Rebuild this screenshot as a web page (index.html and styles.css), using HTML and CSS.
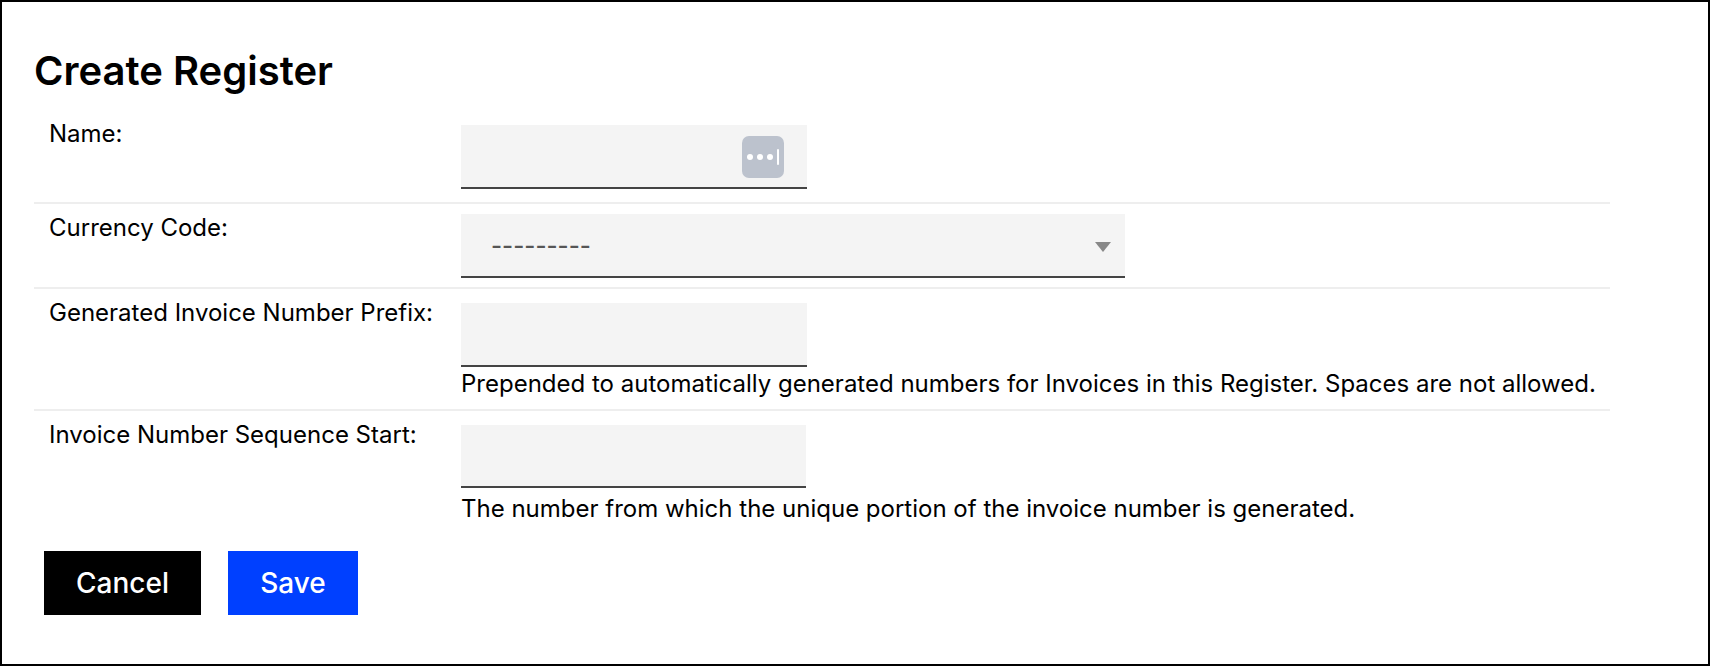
FILE: index.html
```html
<!DOCTYPE html>
<html lang="en">
<head>
<meta charset="utf-8">
<title>Create Register</title>
<link rel="stylesheet" href="styles.css">
</head>
<body>
<main class="page">
  <h1 class="title">Create Register</h1>
  <form class="form">
    <div class="row row-name">
      <label class="label" for="name">Name:</label>
      <div class="field">
        <div class="control control-short">
          <input class="input" id="name" type="text">
          <svg class="manager-icon" viewBox="0 0 42 42" width="42" height="42" aria-hidden="true">
            <rect width="42" height="42" rx="7" fill="#bcc2cd"/>
            <circle cx="8" cy="21" r="3" fill="#fff"/>
            <circle cx="18" cy="21" r="3" fill="#fff"/>
            <circle cx="28" cy="21" r="3" fill="#fff"/>
            <rect x="35" y="13" width="2" height="16" rx="1" fill="#fff"/>
          </svg>
        </div>
      </div>
    </div>
    <div class="row row-select">
      <label class="label" for="currency">Currency Code:</label>
      <div class="field field-flush">
        <div class="control control-wide">
          <select class="input select" id="currency">
            <option>---------</option>
          </select>
          <svg class="caret" viewBox="0 0 16 10" width="16" height="10" aria-hidden="true">
            <path d="M0 0H16L8 10Z" fill="#888"/>
          </svg>
        </div>
      </div>
    </div>
    <div class="row row-prefix">
      <label class="label" for="prefix">Generated Invoice Number Prefix:</label>
      <div class="field field-tight">
        <div class="control control-short">
          <input class="input" id="prefix" type="text">
        </div>
        <p class="help help-prefix">Prepended to automatically generated numbers for Invoices in this Register. Spaces are not allowed.</p>
      </div>
    </div>
    <div class="row row-last">
      <label class="label" for="start">Invoice Number Sequence Start:</label>
      <div class="field field-tight">
        <div class="control control-seq">
          <input class="input" id="start" type="text">
        </div>
        <p class="help help-seq">The number from which the unique portion of the invoice number is generated.</p>
      </div>
    </div>
    <div class="actions">
      <button class="btn btn-cancel" type="button">Cancel</button>
      <button class="btn btn-save" type="submit">Save</button>
    </div>
  </form>
</main>
</body>
</html>
```

FILE: styles.css
```css
* { box-sizing: border-box; }

html, body { margin: 0; padding: 0; background: #fff; }

body {
  font-family: Inter, "Liberation Sans", sans-serif;
  color: #000;
}

.page {
  width: 1710px;
  height: 666px;
  border: 2px solid #000;
  padding: 45px 0 0 32px;
  overflow: hidden;
}

.title {
  margin: 0;
  font-size: 40px;
  line-height: 48px;
  font-weight: 600;
  height: 63px;
}

.form { width: 1576px; }

.row {
  display: grid;
  grid-template-columns: 427px 1fr;
  padding: 10px 0;
  border-bottom: 2px solid #eeeeee;
}

.row-name { padding-bottom: 13px; }
.row-select { padding-bottom: 9px; }
.row-prefix { padding-bottom: 9px; }
.row-last { border-bottom: 0; padding-bottom: 0; }

.label {
  padding-left: 15px;
  font-size: 24px;
  line-height: 28px;
}

.field { padding-top: 5px; }
.field-flush { padding-top: 0; }
.field-tight { padding-top: 4px; }

.control { position: relative; height: 64px; }
.control-short { width: 346px; }
.control-wide { width: 664px; }
.control-seq { width: 345px; height: 63px; }

.input {
  display: block;
  width: 100%;
  height: 100%;
  border: 0;
  border-bottom: 2px solid #444;
  border-radius: 0;
  background: #f4f4f4;
  padding: 0 16px;
  font-family: inherit;
  font-size: 24px;
  color: #555;
  appearance: none;
}

.select { padding-left: 30px; font-weight: 500; }

.manager-icon {
  position: absolute;
  top: 11px;
  right: 23px;
}

.caret {
  position: absolute;
  top: 28px;
  right: 14px;
}

.help {
  margin: 0;
  font-size: 24px;
  line-height: 32px;
}

.help-prefix { margin-top: 1px; }
.help-seq { margin-top: 5px; }

.actions {
  display: flex;
  gap: 27px;
  padding: 26px 0 0 10px;
}

.btn {
  height: 64px;
  border: 0;
  border-radius: 0;
  color: #fff;
  font-family: inherit;
  font-size: 28px;
  font-weight: 500;
}

.btn-cancel { width: 157px; background: #000; }
.btn-save { width: 130px; background: #0040ff; }
```
